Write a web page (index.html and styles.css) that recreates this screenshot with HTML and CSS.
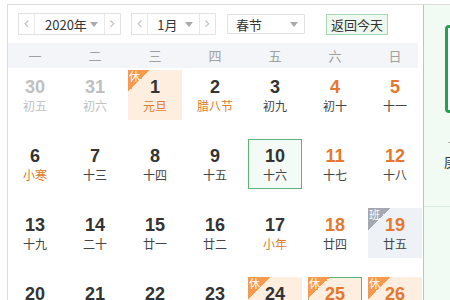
FILE: index.html
```html
<!DOCTYPE html>
<html lang="zh-CN">
<head>
  <meta charset="UTF-8">
  <title>万年历</title>
  <link rel="stylesheet" href="styles.css">
</head>
<body>
  <div class="wrap">
    <div class="main">
      <div class="toolbar">
        <div class="picker year">
          <span class="arrow">&lsaquo;</span>
          <span class="val">2020年</span>
          <span class="caret"></span>
          <span class="arrow">&rsaquo;</span>
        </div>
        <div class="picker month">
          <span class="arrow">&lsaquo;</span>
          <span class="val">1月</span>
          <span class="caret"></span>
          <span class="arrow">&rsaquo;</span>
        </div>
        <div class="select">
          <span class="val">春节</span>
          <span class="caret"></span>
        </div>
        <button type="button" class="today-btn">返回今天</button>
      </div>

      <div class="week">
        <span>一</span><span>二</span><span>三</span><span>四</span><span>五</span><span>六</span><span>日</span>
      </div>

      <div class="days">
        <div class="day other"><b>30</b><i>初五</i></div>
        <div class="day other"><b>31</b><i>初六</i></div>
        <div class="day rest"><em>休</em><b>1</b><i class="fest">元旦</i></div>
        <div class="day"><b>2</b><i class="fest">腊八节</i></div>
        <div class="day"><b>3</b><i>初九</i></div>
        <div class="day weekend"><b>4</b><i>初十</i></div>
        <div class="day weekend"><b>5</b><i>十一</i></div>

        <div class="day"><b>6</b><i class="fest">小寒</i></div>
        <div class="day"><b>7</b><i>十三</i></div>
        <div class="day"><b>8</b><i>十四</i></div>
        <div class="day"><b>9</b><i>十五</i></div>
        <div class="day today"><b>10</b><i>十六</i></div>
        <div class="day weekend"><b>11</b><i>十七</i></div>
        <div class="day weekend"><b>12</b><i>十八</i></div>

        <div class="day"><b>13</b><i>十九</i></div>
        <div class="day"><b>14</b><i>二十</i></div>
        <div class="day"><b>15</b><i>廿一</i></div>
        <div class="day"><b>16</b><i>廿二</i></div>
        <div class="day"><b>17</b><i class="fest">小年</i></div>
        <div class="day weekend"><b>18</b><i>廿四</i></div>
        <div class="day work weekend"><em>班</em><b>19</b><i>廿五</i></div>

        <div class="day"><b>20</b><i>廿六</i></div>
        <div class="day"><b>21</b><i>廿七</i></div>
        <div class="day"><b>22</b><i>廿八</i></div>
        <div class="day"><b>23</b><i>廿九</i></div>
        <div class="day rest"><em>休</em><b>24</b><i class="fest">除夕</i></div>
        <div class="day rest weekend picked"><em>休</em><b>25</b><i class="fest">春节</i></div>
        <div class="day rest weekend"><em>休</em><b>26</b><i>初二</i></div>
      </div>
    </div>

    <div class="side">
      <div class="big-date">10</div>
      <div class="lunar-small">十二月十六</div>
      <div class="ganzhi">庚子年 丁丑月</div>
      <div class="side-line"></div>
    </div>
  </div>
</body>
</html>
```

FILE: styles.css
```css
body {
  margin: 0;
  background: #fff;
  font-family: "Noto Sans CJK SC", "Liberation Sans", sans-serif;
  color: #333;
  overflow: hidden;
}
.wrap {
  display: flex;
  margin: 4px 0 0 7px;
  height: 296px;
}
.main {
  width: 415px;
  border-top: 1px solid #ddd;
  border-left: 1px solid #ddd;
  overflow: hidden;
  flex-shrink: 0;
}
.toolbar {
  display: flex;
  align-items: center;
  height: 38px;
  padding: 0 0 0 10px;
}
.picker, .select {
  display: flex;
  align-items: center;
  height: 20px;
  border: 1px solid #e2e2e2;
  font-size: 13px;
  color: #333;
}
.picker .arrow {
  width: 16px;
  height: 20px;
  line-height: 18px;
  text-align: center;
  color: #aaa;
  font-size: 17px;
  font-family: "DejaVu Sans", sans-serif;
  font-weight: 200;
}
.picker .arrow:first-child { border-right: 1px solid #e8e8e8; }
.picker .arrow:last-child { border-left: 1px solid #e8e8e8; }
.caret {
  width: 0;
  height: 0;
  border-left: 4px solid transparent;
  border-right: 4px solid transparent;
  border-top: 5px solid #aaa;
}
.year { width: 101px; }
.year .val { padding-left: 10px; width: 48px; }
.year .caret { margin: 0 6px 0 0; }
.month { width: 83px; margin-left: 10px; }
.month .val { padding-left: 9px; width: 27px; }
.month .caret { margin: 0 6px 0 2px; }
.select {
  width: 78px;
  margin-left: 11px;
  justify-content: space-between;
  padding-left: 8px;
  box-sizing: border-box;
}
.select .caret { margin-right: 6px; }
.today-btn {
  margin-left: 21px;
  height: 21px;
  padding: 0 4px;
  font-family: "Noto Sans CJK SC", sans-serif;
  font-size: 13px;
  color: #333;
  background: #eef8f1;
  border: 1px solid #a9d8b7;
  line-height: 19px;
}

.week {
  display: grid;
  grid-template-columns: repeat(7, 54px);
  column-gap: 6px;
  height: 25px;
  width: 410px;
  background: #f3f5f8;
  align-items: center;
  font-size: 13px;
  color: #a0a0a0;
}
.week span { text-align: center; }

.days {
  display: grid;
  grid-template-columns: repeat(7, 54px);
  grid-auto-rows: 50px;
  column-gap: 6px;
  row-gap: 19px;
  margin-top: 2px;
}
.day {
  position: relative;
  box-sizing: border-box;
  text-align: center;
  padding-top: 7px;
}
.day b {
  display: block;
  font-family: "Liberation Sans", Arial, sans-serif;
  font-size: 18px;
  line-height: 21px;
  font-weight: bold;
  color: #333;
}
.day i {
  display: block;
  font-style: normal;
  font-size: 12px;
  line-height: 16px;
  color: #444;
}
.day.other b, .day.other i { color: #c0c0c0; }
.day.weekend b { color: #e5772e; }
.day i.fest { color: #e07b2c; }
.day.rest { background: #fdeee0; }
.day.work { background: #eef1f5; }
.day.today {
  border: 1px solid #5bb57b;
  background: #f4fbf6;
  padding-top: 6px;
}
.day.picked {
  border: 1px solid #5bb57b;
  padding-top: 6px;
}
.day em {
  position: absolute;
  left: 0;
  top: 0;
  width: 22px;
  height: 22px;
  font-style: normal;
  font-size: 11px;
  line-height: 13px;
  color: #fff;
  text-align: left;
  padding-left: 1px;
  box-sizing: border-box;
  background: linear-gradient(135deg, #f59a4f 50%, transparent 50%);
}
.day.picked em, .day.today em { left: -1px; top: -1px; }
.day.work em {
  background: linear-gradient(135deg, #a4a9b1 50%, transparent 50%);
}

.side {
  flex: 1;
  background: #f1fbf4;
  border-top: 1px solid #ddd;
  border-left: 1px solid #a9d3b5;
  overflow: hidden;
  white-space: nowrap;
}
.big-date {
  margin: 20px 0 0 21px;
  width: 60px;
  height: 82px;
  border: 3px solid #22a34f;
  border-radius: 4px;
  background: #fff;
  color: #fff;
}
.lunar-small {
  margin: 24px 0 0 24px;
  font-size: 10px;
  line-height: 12px;
  color: #777;
}
.ganzhi {
  margin: 4px 0 0 20px;
  font-size: 13px;
  line-height: 18px;
  color: #333;
}
.side-line {
  margin-top: 35px;
  border-top: 1px solid #d6ecdc;
}
```
